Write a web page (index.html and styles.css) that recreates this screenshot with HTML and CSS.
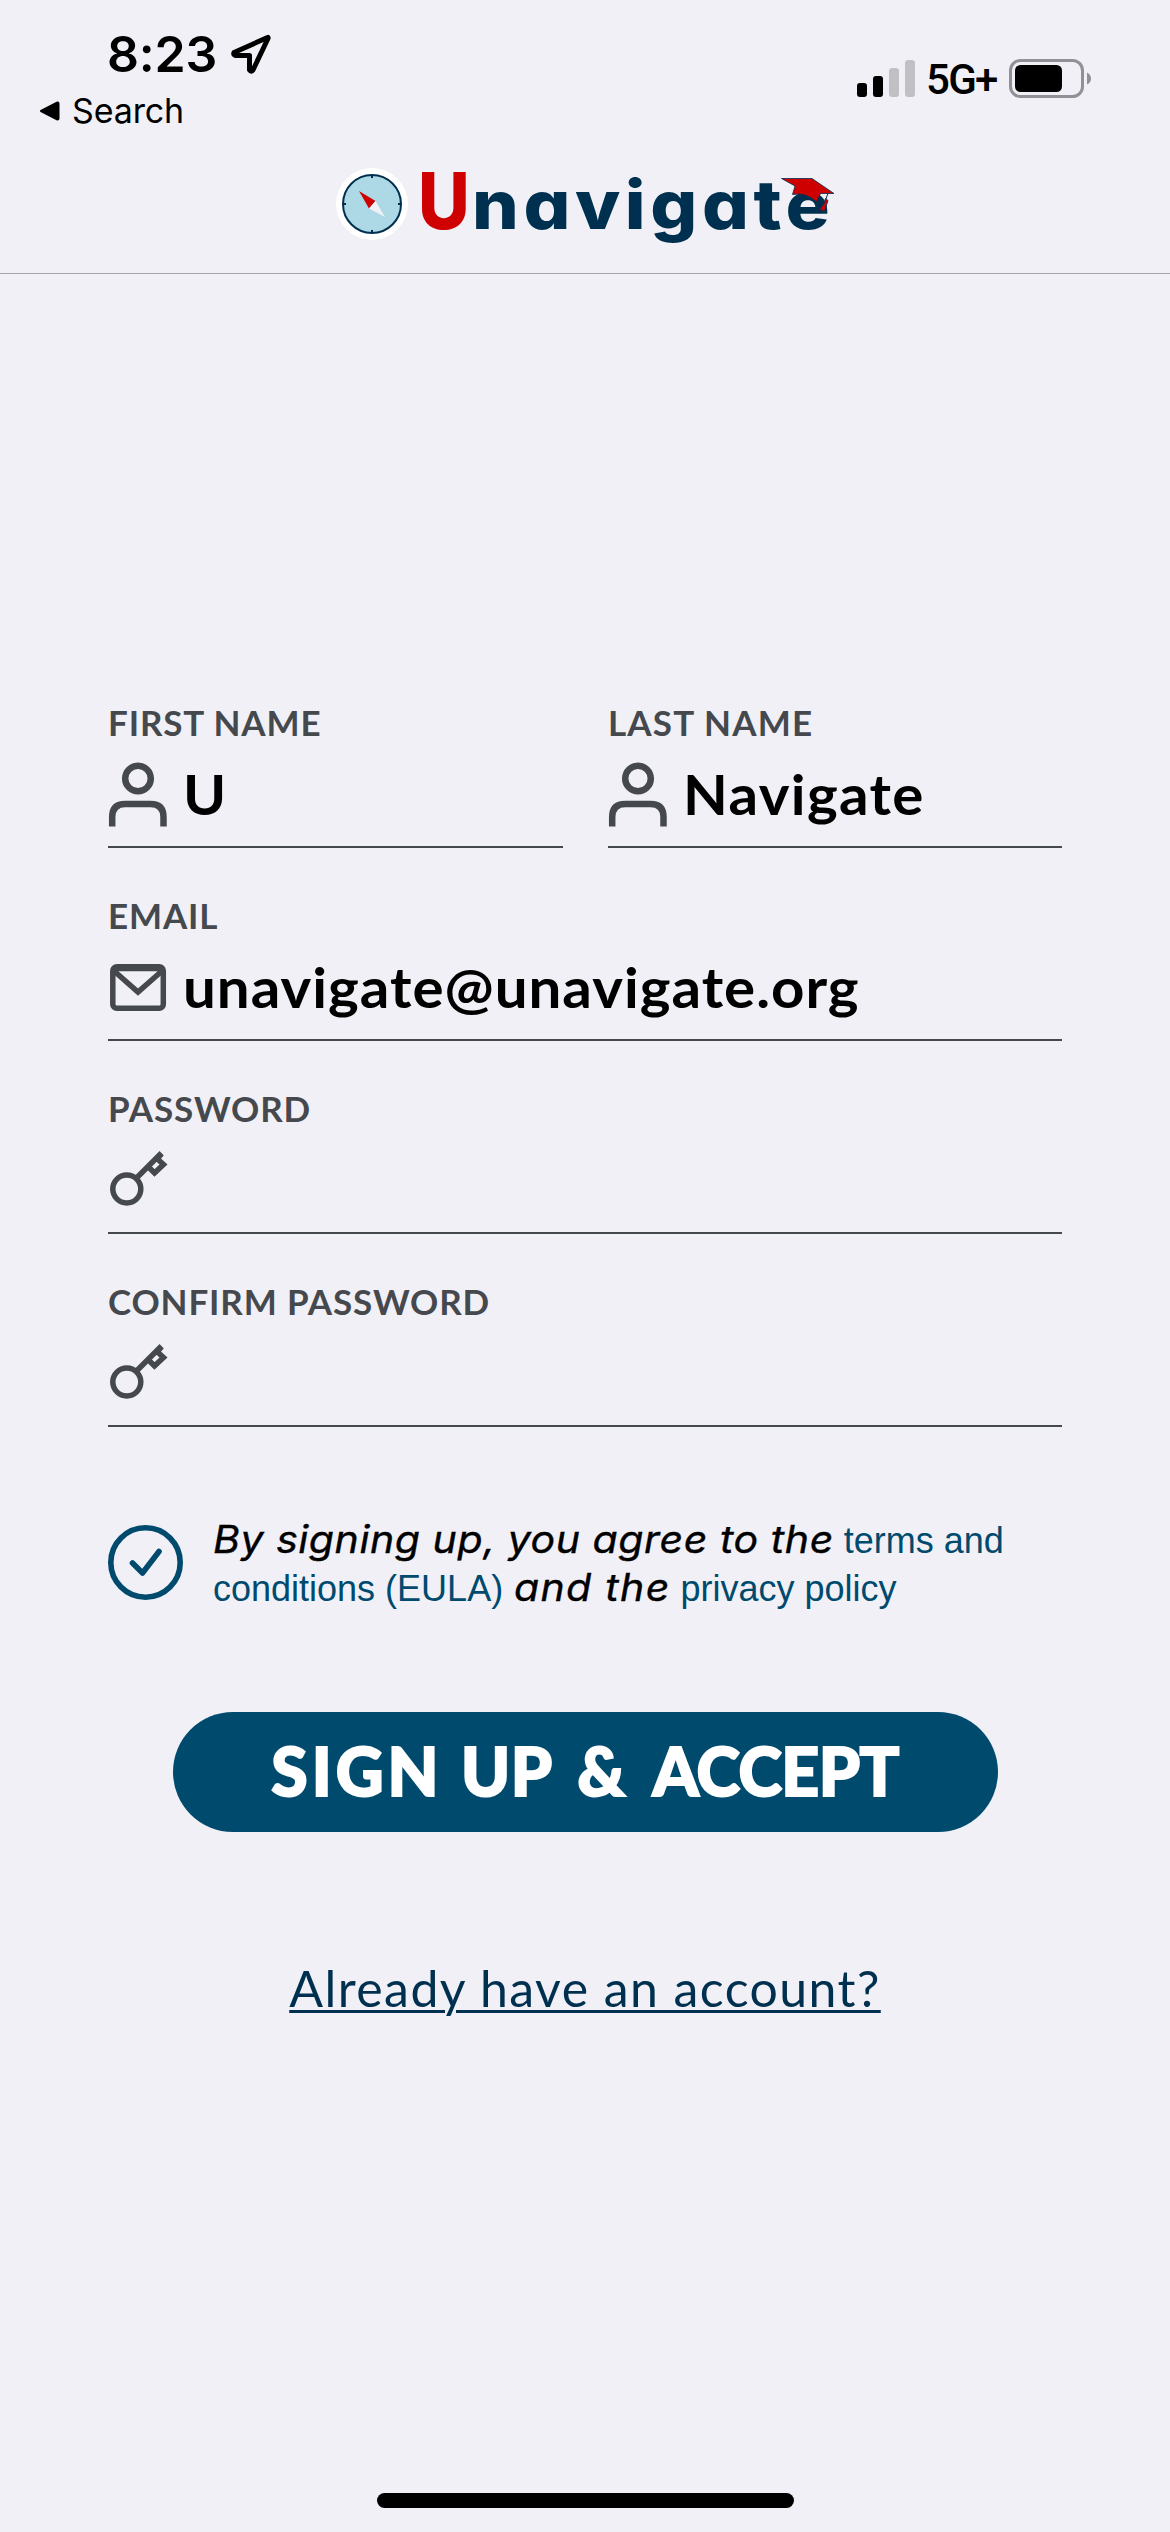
FILE: index.html
```html
<!DOCTYPE html>
<html lang="en">
<head>
<meta charset="utf-8">
<title>Unavigate – Sign up</title>
<link rel="stylesheet" href="styles.css">
</head>
<body>
<svg class="sprite" aria-hidden="true">
  <symbol id="icon-person" viewBox="0 0 60 66">
    <circle cx="30" cy="16.500" r="12.800"/>
    <path d="M4.200 64.500V55Q4.200 42 17.200 42H42.500Q55.500 42 55.500 55V64.500"/>
  </symbol>
  <symbol id="icon-key" viewBox="0 2.500 60 66">
    <circle cx="18.800" cy="43.500" r="14"/>
    <path d="M29 32L53.500 7.500M51 9.500L54 12M40.500 21.500L46.500 27.500L55.500 19L49.500 13.500"/>
  </symbol>
</svg>
<div class="screen">
  <div class="status">
    <div class="status-left">
      <div class="clock">
        <span class="time">8:23</span>
        <svg class="location" viewBox="0 0 40 40" width="40" height="40"><path d="M36.500 3.500L3 18.500Q2 21 4.500 21.500H18.500V36Q20 38.500 22 36L37 4.500Q37.500 3 36.500 3.500Z"/></svg>
      </div>
      <div class="back">
        <svg width="21" height="22" viewBox="0 0 21 22"><path d="M2 11L18.500 2.500Q19.500 2.500 19.500 3.500V18.500Q19.500 19.500 18.500 19.500Z" stroke="#000" stroke-width="2" stroke-linejoin="round"/></svg>
        <span>Search</span>
      </div>
    </div>
    <div class="status-right">
      <svg width="58" height="37" viewBox="0 0 58 37">
        <rect y="23" width="10" height="14" rx="3"/>
        <rect x="16" y="16" width="10" height="21" rx="3"/>
        <rect x="32" y="8" width="10" height="29" rx="3" fill="#c1c0c5"/>
        <rect x="48" width="10" height="37" rx="3" fill="#c1c0c5"/>
      </svg>
      <span class="network">5G+</span>
      <svg width="82" height="39" viewBox="0 0 82 39">
        <rect x="1.500" y="1.500" width="72" height="36" rx="10" fill="none" stroke="#919096" stroke-width="3"/>
        <rect x="6" y="6" width="47" height="27" rx="5.500"/>
        <path d="M78 13.500Q82 15.500 82 19.500T78 25.500Z" fill="#919096"/>
      </svg>
    </div>
  </div>
  <header class="brand">
    <svg class="compass" width="72" height="72" viewBox="0 0 72 72">
      <circle cx="36" cy="36" r="36" fill="#fff"/>
      <circle cx="36" cy="36" r="29" fill="#add8e6" stroke="#00304f" stroke-width="2"/>
      <path d="M36 7V10M36 62V65M7 36H10M62 36H65" stroke="#00304f" stroke-width="2"/>
      <path d="M23 23L39.500 33L33 40.500Z" fill="#cf0000"/>
      <path d="M39.500 33L49 49L33 40.500Z" fill="#f1f0f6"/>
    </svg>
    <div class="wordmark"><span class="initial">U</span><span class="rest">navigate</span>
      <svg class="cap" width="56" height="38" viewBox="0 0 56 38">
        <path d="M1.500 1.500H32L54 16.500H40.500L36.500 25Q26 15 12.500 17.500L15 9Z" fill="#cf0000" stroke="#00304f" stroke-width=".8"/>
        <path d="M48 16.500L45.500 23" stroke="#00304f" fill="none"/>
        <path d="M45.500 21.500L48 23.500L44.500 34.500L39.500 32.500L44 26.500Z" fill="#cf0000" stroke="#00304f" stroke-width=".8"/>
      </svg>
    </div>
  </header>
  <main class="form">
    <div class="names">
      <div class="field">
        <div class="label">FIRST NAME</div>
        <div class="value"><svg class="icon icon-bold"><use href="#icon-person"/></svg><span>U</span></div>
      </div>
      <div class="field">
        <div class="label label-last">LAST NAME</div>
        <div class="value"><svg class="icon icon-bold"><use href="#icon-person"/></svg><span>Navigate</span></div>
      </div>
    </div>
    <div class="field">
      <div class="label">EMAIL</div>
      <div class="value value-email">
        <svg class="icon" viewBox="0 0 60 66"><rect x="4.800" y="11.800" width="50.500" height="41.500" rx="4"/><path d="M5.500 15.500L30 37L54.500 15.500M5 13.500H55"/></svg>
        <span>unavigate@unavigate.org</span>
      </div>
    </div>
    <div class="field">
      <div class="label">PASSWORD</div>
      <div class="value"><svg class="icon"><use href="#icon-key"/></svg></div>
    </div>
    <div class="field">
      <div class="label">CONFIRM PASSWORD</div>
      <div class="value"><svg class="icon"><use href="#icon-key"/></svg></div>
    </div>
    <div class="consent">
      <svg width="75" height="75" viewBox="0 0 75 75"><circle cx="37.500" cy="37.500" r="34.700"/><path d="M24.500 38L34.500 48L51 26.500"/></svg>
      <p><span class="agree">By signing up, you agree to the</span> <a>terms and</a><br><a>conditions (EULA)</a> <span class="joint">and the</span> <a>privacy policy</a></p>
    </div>
    <div class="submit"><span class="open">SIGN</span> UP &amp; <span class="tight">ACCEPT</span></div>
    <a class="login">Already have an account?</a>
  </main>
  <div class="home"></div>
</div>
</body>
</html>
```

FILE: styles.css
```css
* { box-sizing: border-box; }
body { margin: 0; background: #f1f0f6; color: #000; font-family: Lato, "Open Sans", sans-serif; }
svg { display: block; flex: none; }
.sprite { position: absolute; width: 0; height: 0; }
.screen { width: 1170px; height: 2532px; display: flex; flex-direction: column; overflow: hidden; }

.status { height: 142px; display: flex; justify-content: space-between; padding: 24px 79px 0 39px; font-family: Inter, sans-serif; }
.clock { display: flex; padding-left: 68px; height: 60px; gap: 14px; }
.time { font-size: 50px; font-weight: 600; line-height: 60px; letter-spacing: -.17px; }
.location { margin-top: 10px; fill: none; stroke: #000; stroke-width: 5; stroke-linejoin: round; }
.back { display: flex; align-items: center; gap: 12px; margin-top: 7px; font-size: 34px; line-height: 40px; letter-spacing: -.14px; }
.status-right { display: flex; align-items: center; height: 50px; margin-top: 29px; gap: 11px; }
.network { width: 72px; font: 500 42px/50px Roboto, sans-serif; letter-spacing: -1.7px; margin-top: 4px; }

.brand { height: 132px; display: flex; padding: 18px 0 0 336px; border-bottom: 1px solid #a4a4aa; font-family: Inter, sans-serif; font-feature-settings: "cv11"; }
.compass { margin-top: 8px; }
.wordmark { position: relative; display: flex; align-items: baseline; height: 80px; padding-left: 10px; line-height: 80px; font-weight: 800; color: #00304f; }
.initial { width: 54px; font-size: 79px; color: #cf0000; transform: scaleX(.9); transform-origin: left; }
.rest { font-size: 67px; letter-spacing: 4.15px; transform: scaleX(1.1); transform-origin: left; }
.cap { position: absolute; left: 371.500px; top: 16.500px; }

.form { flex: 1; display: flex; flex-direction: column; padding: 427px 108px 0; }
.names { display: grid; grid-template-columns: 455px 454px; gap: 45px; }
.field { height: 147px; margin-bottom: 46px; border-bottom: 2px solid #45494e; }
.label { height: 42px; font-size: 35px; line-height: 42px; font-weight: 700; letter-spacing: .86px; color: #45494e; white-space: nowrap; }
.label-last { letter-spacing: 1.18px; }
.value { height: 103px; display: flex; align-items: center; gap: 15px; font-size: 56px; line-height: 68px; font-weight: 700; letter-spacing: 1.3px; }
.value span { padding-bottom: 1px; transform: scaleX(1.04); transform-origin: left; }
.value-email { letter-spacing: .96px; }
.icon { width: 60px; height: 66px; fill: none; stroke: #45494e; stroke-width: 5.500; }
.icon-bold { stroke-width: 6.500; }

.consent { display: flex; align-items: center; gap: 30px; margin-top: 40px; height: 99px; white-space: nowrap; }
.consent svg { fill: none; stroke: #004a6e; stroke-width: 5.600; stroke-linecap: round; stroke-linejoin: round; }
.consent p { margin: 0; font: italic 400 38px/48px Inter, sans-serif; font-feature-settings: "cv11"; }
.agree, .joint { display: inline-block; transform: scaleX(1.08); transform-origin: left; -webkit-text-stroke: .4px #000; }
.agree { width: 583px; letter-spacing: .52px; margin-right: 37px; }
.joint { width: 146px; letter-spacing: 1.2px; margin-right: 10px; }
.consent a { font: normal 400 36px/1 "Liberation Sans", sans-serif; color: #004a6e; }

.submit { align-self: center; width: 825px; height: 120px; margin-top: 100px; border-radius: 60px; background: #004a6e; color: #fff; text-align: center; font-size: 66px; font-weight: 900; line-height: 118px; letter-spacing: .67px; word-spacing: 10px; -webkit-text-stroke: 2px #fff; white-space: nowrap; }
.open { letter-spacing: 4px; margin-right: -8px; }
.tight { letter-spacing: -.6px; }
.login { align-self: center; margin-top: 126px; font-size: 50px; line-height: 60px; letter-spacing: 1.43px; color: #00304f; text-decoration: underline; text-decoration-thickness: 3px; text-underline-offset: 3px; }
.home { align-self: center; width: 417px; height: 15px; margin-bottom: 24px; border-radius: 8px; background: #000; }
```
